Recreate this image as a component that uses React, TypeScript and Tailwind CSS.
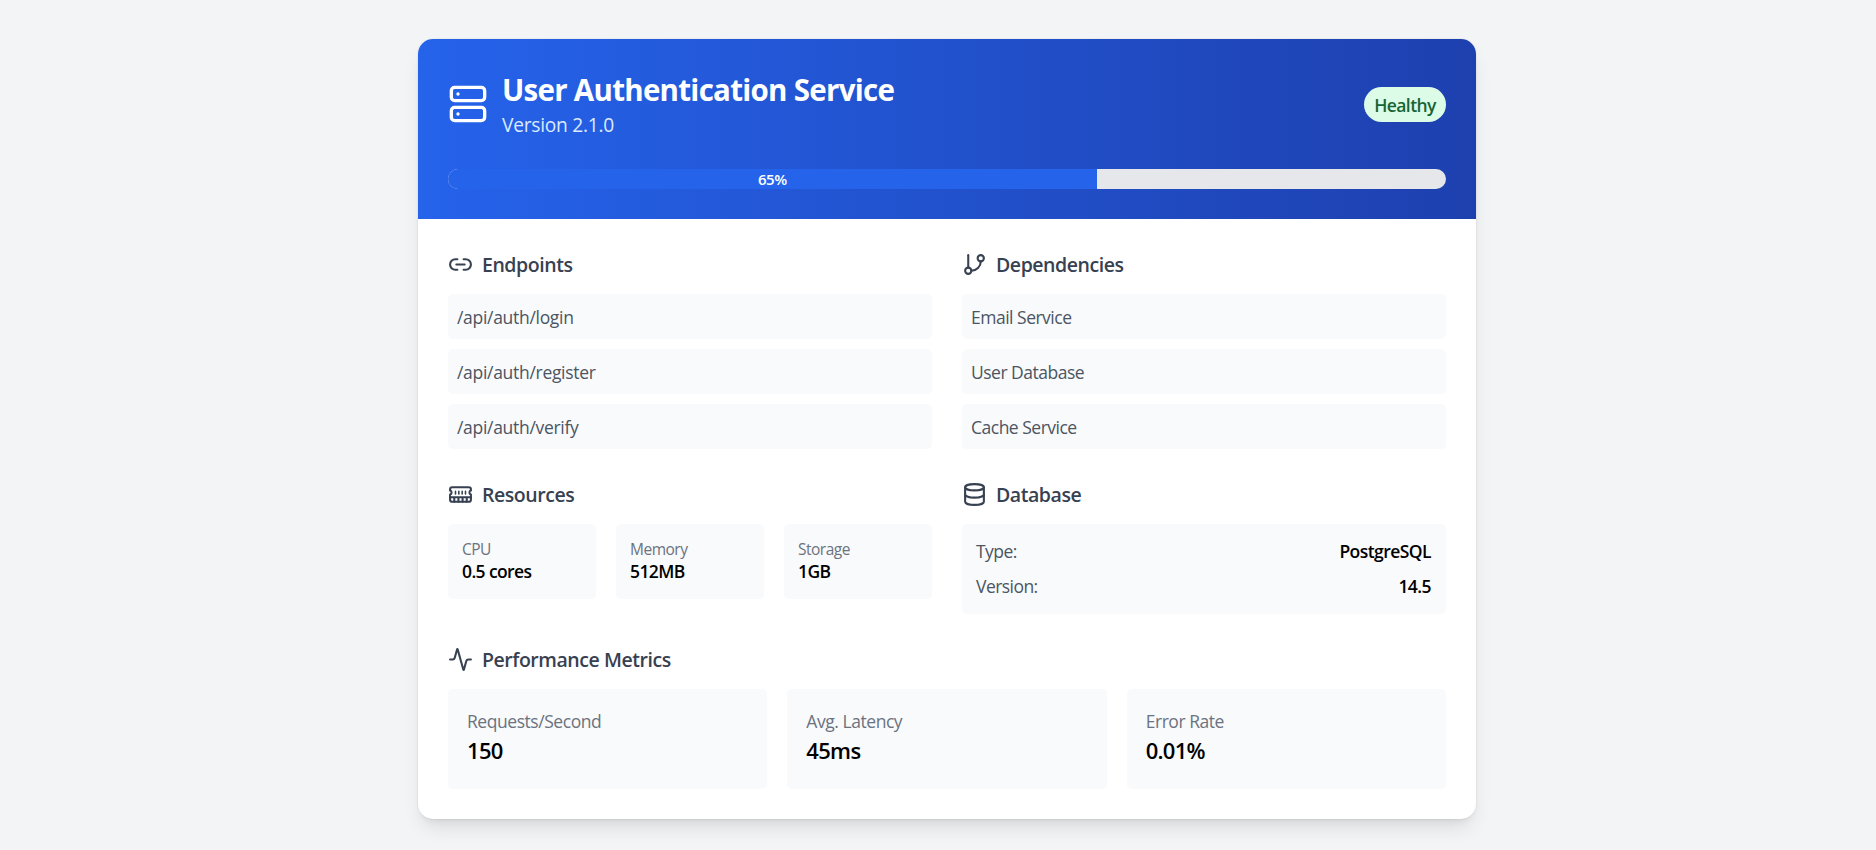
import { Server, Link2, GitBranch, Database, Activity } from "lucide-react";
import type { ComponentType, ReactNode } from "react";

function MemoryIcon({ size = 24 }: { size?: number | string }) {
  return (
    <svg width={size} height={size} viewBox="0 0 24 24" fill="none" stroke="currentColor" strokeWidth="2" strokeLinecap="round" strokeLinejoin="round">
      <path d="M2 7a2 2 0 0 1 2-2h16a2 2 0 0 1 2 2v1.1a2 2 0 0 0 0 3.837V17a2 2 0 0 1-2 2H4a2 2 0 0 1-2-2v-5.1a2 2 0 0 0 0-3.837Z" />
      <path d="M2 14.7h20M6 19v-4M10 19v-4M14 19v-4M18 19v-4" />
      <path d="M7.2 9v2.4M10.4 9v2.4M13.6 9v2.4M16.8 9v2.4" strokeWidth="1.5" />
    </svg>
  );
}

type IconType = ComponentType<{ size?: number | string }>;

function Section({ icon: Icon, title, className = "", children }: { icon: IconType; title: string; className?: string; children: ReactNode }) {
  return (
    <section className={className}>
      <h2 className="mb-[15px] flex h-[30px] items-center gap-[9px] text-[19.5px] font-semibold tracking-[-0.45px] text-[#374151]">
        <Icon size={25} />
        <span className="pt-px">{title}</span>
      </h2>
      {children}
    </section>
  );
}

function Rows({ items, tracking }: { items: string[]; tracking: string }) {
  return (
    <ul className="flex flex-col gap-2.5">
      {items.map((item) => (
        <li key={item} className={`rounded-[5px] bg-[#f9fafb] pt-[11px] pr-2.5 pb-[9px] pl-[9px] text-[17.5px] leading-[25px] text-[#4b5563] ${tracking}`}>
          {item}
        </li>
      ))}
    </ul>
  );
}

function Resource({ label, value }: { label: string; value: string }) {
  return (
    <div className="rounded-[5px] bg-[#f9fafb] py-[15px] pr-[15px] pl-[14px]">
      <p className="text-[15.5px] leading-5 tracking-[-0.5px] text-[#6b7280]">{label}</p>
      <p className="text-[17.5px] leading-[25px] font-semibold tracking-[-0.6px] text-black">{value}</p>
    </div>
  );
}

function Metric({ label, value }: { label: string; value: string }) {
  return (
    <div className="rounded-[5px] bg-[#f9fafb] py-5 pr-5 pl-[19px]">
      <p className="text-[17.5px] leading-[25px] tracking-[-0.45px] text-[#6b7280]">{label}</p>
      <p className="pb-0.5 text-[22px] leading-[33px] font-semibold tracking-[-0.7px] text-black">{value}</p>
    </div>
  );
}

function Detail({ label, value }: { label: string; value: string }) {
  return (
    <div className="flex justify-between text-[17.5px] leading-[25px] tracking-[-0.55px]">
      <span className="text-[#4b5563]">{label}</span>
      <span className="font-semibold text-black">{value}</span>
    </div>
  );
}

export default function App() {
  const progress = 65;
  return (
    <div className="h-[850px] overflow-hidden bg-[#f3f4f6] pt-[39px] pl-[418px] font-['Open_Sans',sans-serif]">
      <main className="w-[1058px] overflow-hidden rounded-[15px] bg-white shadow-[0_0_0_1px_rgba(0,0,0,0.03),0_12px_19px_-4px_rgba(0,0,0,0.1),0_5px_8px_-5px_rgba(0,0,0,0.1)]">
        <header className="bg-linear-to-r from-[#2563eb] to-[#1e40af] p-[30px]">
          <div className="flex items-center justify-between">
            <div className="flex items-center gap-[14px] text-white">
              <Server size={40} />
              <div className="h-[70px] pt-px">
                <h1 className="text-[29.5px] leading-10 font-bold tracking-[-0.72px]">User Authentication Service</h1>
                <p className="text-[19.2px] leading-[30px] tracking-[-0.25px] text-[#dbeafe]">Version 2.1.0</p>
              </div>
            </div>
            <span className="flex h-[35px] w-[82px] items-center justify-center rounded-full bg-[#dcfce7] pt-0.5 text-[17.5px] font-semibold tracking-[-0.6px] text-[#166534]">
              Healthy
            </span>
          </div>
          <div className="mt-[30px] h-5 overflow-hidden rounded-full bg-[#e5e7eb]">
            <div className="flex h-full items-center justify-center bg-[#2563eb] text-[15px] font-semibold tracking-[-0.4px] text-white" style={{ width: `${progress}%` }}>
              {progress}%
            </div>
          </div>
        </header>
        <div className="grid grid-cols-2 gap-[30px] p-[30px]">
          <Section icon={Link2} title="Endpoints">
            <Rows items={["/api/auth/login", "/api/auth/register", "/api/auth/verify"]} tracking="tracking-[-0.3px]" />
          </Section>
          <Section icon={GitBranch} title="Dependencies">
            <Rows items={["Email Service", "User Database", "Cache Service"]} tracking="tracking-[-0.5px]" />
          </Section>
          <Section icon={MemoryIcon} title="Resources">
            <div className="grid grid-cols-3 gap-5">
              <Resource label="CPU" value="0.5 cores" />
              <Resource label="Memory" value="512MB" />
              <Resource label="Storage" value="1GB" />
            </div>
          </Section>
          <Section icon={Database} title="Database">
            <div className="flex flex-col gap-2.5 rounded-[5px] bg-[#f9fafb] py-[15px] pr-[15px] pl-[14px]">
              <Detail label="Type:" value="PostgreSQL" />
              <Detail label="Version:" value="14.5" />
            </div>
          </Section>
          <Section icon={Activity} title="Performance Metrics" className="col-span-2">
            <div className="grid grid-cols-3 gap-5">
              <Metric label="Requests/Second" value="150" />
              <Metric label="Avg. Latency" value="45ms" />
              <Metric label="Error Rate" value="0.01%" />
            </div>
          </Section>
        </div>
      </main>
    </div>
  );
}
